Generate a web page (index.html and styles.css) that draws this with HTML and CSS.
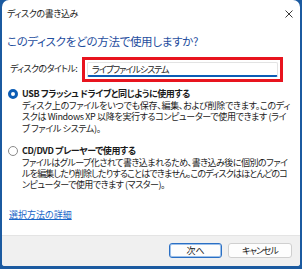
FILE: index.html
```html
<!DOCTYPE html>
<html lang="ja">
<head>
<meta charset="utf-8">
<link rel="stylesheet" href="styles.css">
</head>
<body>
<div class="desk">
  <div class="window">
    <div class="titlebar">
      <span class="title">ディスクの書き込み</span>
      <svg class="close" width="8" height="8" viewBox="0 0 8 8"><path d="M0.5 0.5 L7.5 7.5 M7.5 0.5 L0.5 7.5" stroke="#222" stroke-width="0.9" fill="none"/></svg>
    </div>
    <div class="content">
      <div class="heading">このディスクをどの方法で使用しますか?</div>
      <div class="title-row">
        <span class="label">ディスクのタイトル:</span>
        <div class="highlight">
          <div class="textbox">ライブファイルシステム</div>
        </div>
      </div>
      <div class="option first">
        <div class="option-head"><span class="radio checked"></span><span class="option-label">USB フラッシュ ドライブと同じように使用する</span></div>
        <div class="desc">
          <span class="line ls27">ディスク上のファイルをいつでも保存、編集、および削除できます。このディ</span>
          <span class="line ls35">スクは Windows XP 以降を実行するコンピューターで使用できます (ライ</span>
          <span class="line ls35">ブ ファイル システム)。</span>
        </div>
      </div>
      <div class="option second">
        <div class="option-head"><span class="radio"></span><span class="option-label">CD/DVD プレーヤーで使用する</span></div>
        <div class="desc">
          <span class="line ls50">ファイルはグループ化されて書き込まれるため、書き込み後に個別のファイ</span>
          <span class="line ls80">ルを編集したり削除したりすることはできません。このディスクはほとんどのコ</span>
          <span class="line ls50">ンピューターで使用できます (マスター)。</span>
        </div>
      </div>
      <a class="link" href="#">選択方法の詳細</a>
    </div>
    <div class="footer">
      <button class="btn default">次へ</button>
      <button class="btn cancel">キャンセル</button>
    </div>
  </div>
</div>
</body>
</html>
```
FILE: styles.css
```css
html, body {
  margin: 0;
  padding: 0;
}
body {
  font-family: "Noto Sans CJK JP", "Noto Sans", sans-serif;
  font-feature-settings: "palt";
  color: #1a1a1a;
}
.desk {
  width: 302px;
  height: 269px;
  background: #1b5aa0;
  padding: 0 2px 3px 2px;
  box-sizing: border-box;
}
.window {
  height: 100%;
  background: #ffffff;
  border-radius: 7px 7px 3px 3px;
  overflow: hidden;
  display: flex;
  flex-direction: column;
}
.titlebar {
  height: 27px;
  display: flex;
  align-items: center;
  justify-content: space-between;
  padding: 0 7px 0 5px;
  flex: none;
}
.title {
  font-size: 9px;
  line-height: 12px;
  letter-spacing: -0.35px;
}
.close {
  display: block;
}
.content {
  flex: 1;
  padding: 0 6px;
  display: flex;
  flex-direction: column;
  align-items: flex-start;
}
.heading {
  margin-top: 7px;
  font-size: 11.5px;
  line-height: 15px;
  letter-spacing: -0.3px;
  color: #1f4e9e;
  margin-left: -1px;
}
.title-row {
  margin-top: 8px;
  display: flex;
  align-items: center;
}
.label {
  font-size: 9px;
  line-height: 12px;
  letter-spacing: -0.6px;
  width: 72px;
  margin-left: 2px;
  margin-top: -1px;
  white-space: nowrap;
}
.highlight {
  width: 201px;
  height: 25px;
  box-sizing: border-box;
  border: 3px solid #e8141e;
  padding: 2px;
}
.textbox {
  height: 100%;
  box-sizing: border-box;
  border: 1px solid #e3e3e3;
  border-bottom: 2px solid #0b5cb5;
  border-radius: 2px;
  font-size: 9px;
  line-height: 13px;
  letter-spacing: -1px;
  padding-left: 4px;
}
.option {
  display: flex;
  flex-direction: column;
}
.option.first {
  margin-top: 6px;
}
.option.second {
  margin-top: 11px;
}
.option-head {
  display: flex;
  align-items: center;
  height: 12px;
}
.radio {
  width: 10px;
  height: 10px;
  box-sizing: border-box;
  border-radius: 50%;
  border: 1px solid #8a8a8a;
  background: #fff;
  margin-right: 4px;
  flex: none;
}
.radio.checked {
  border: 3px solid #0b5cb5;
  background: #fff;
}
.option-label {
  font-size: 9px;
  line-height: 12px;
  font-weight: bold;
  letter-spacing: -0.42px;
}
.desc {
  font-size: 9px;
  line-height: 11.3px;
  margin-left: 14px;
  display: flex;
  flex-direction: column;
}
.line {
  white-space: nowrap;
}
.ls27 { letter-spacing: -0.27px; }
.ls35 { letter-spacing: -0.35px; }
.ls50 { letter-spacing: -0.5px; }
.ls80 { letter-spacing: -0.8px; }
.link {
  margin-top: 18px;
  margin-left: 1px;
  font-size: 9px;
  line-height: 11px;
  color: #1a66c8;
  text-decoration: underline;
}
.footer {
  height: 31px;
  flex: none;
  box-sizing: border-box;
  background: #f0f0f0;
  border-top: 1px solid #e4e4e4;
  display: flex;
  align-items: center;
  justify-content: flex-end;
  gap: 6px;
  padding: 0 8px 2px 0;
}
.btn {
  height: 15px;
  box-sizing: border-box;
  font-family: "Noto Sans CJK JP", "Noto Sans", sans-serif;
  font-feature-settings: "palt";
  font-size: 9px;
  line-height: 11px;
  color: #1a1a1a;
  background: #fdfdfd;
  border: 1px solid #cfcfcf;
  border-radius: 3px;
  padding: 0;
}
.btn.default {
  width: 53px;
  border: 1px solid #2a6fc4;
  box-shadow: inset 0 0 0 1px #9cc0ea;
}
.btn.cancel {
  width: 64px;
  letter-spacing: -1px;
}
```
